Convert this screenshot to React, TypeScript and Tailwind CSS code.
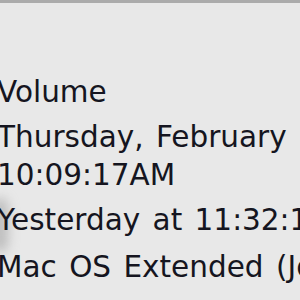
export default function App() {
  const rows: string[][] = [
    ["Volume"],
    ["Thursday, February 2, 2012", "10:09:17AM"],
    ["Yesterday at 11:32:15 AM"],
    ["Mac OS Extended (Journaled)"],
  ];
  const margins = ["mt-[70px]", "mt-[7px]", "mt-[7px]", "mt-[9px]"];
  return (
    <div
      className="relative w-[300px] h-[300px] overflow-hidden bg-[#e8e8e8]"
      style={{ fontFamily: '"DejaVu Sans", Verdana, sans-serif' }}
    >
      <div className="h-[3px] bg-[#ababab]" />
      <div className="absolute left-[-8px] top-[198px] w-[16px] h-[54px] rounded-full bg-[#a0a0a0] blur-[6px] opacity-60" />
      <div className="relative ml-[-3px] flex flex-col">
        {rows.map((lines, i) => (
          <div key={i} className={`${margins[i]} flex flex-col`}>
            {lines.map((t, j) => (
              <div
                key={j}
                className="whitespace-nowrap text-[29.5px] leading-[38px] [word-spacing:3px] text-[#151520]"
              >
                {t}
              </div>
            ))}
          </div>
        ))}
      </div>
    </div>
  );
}
